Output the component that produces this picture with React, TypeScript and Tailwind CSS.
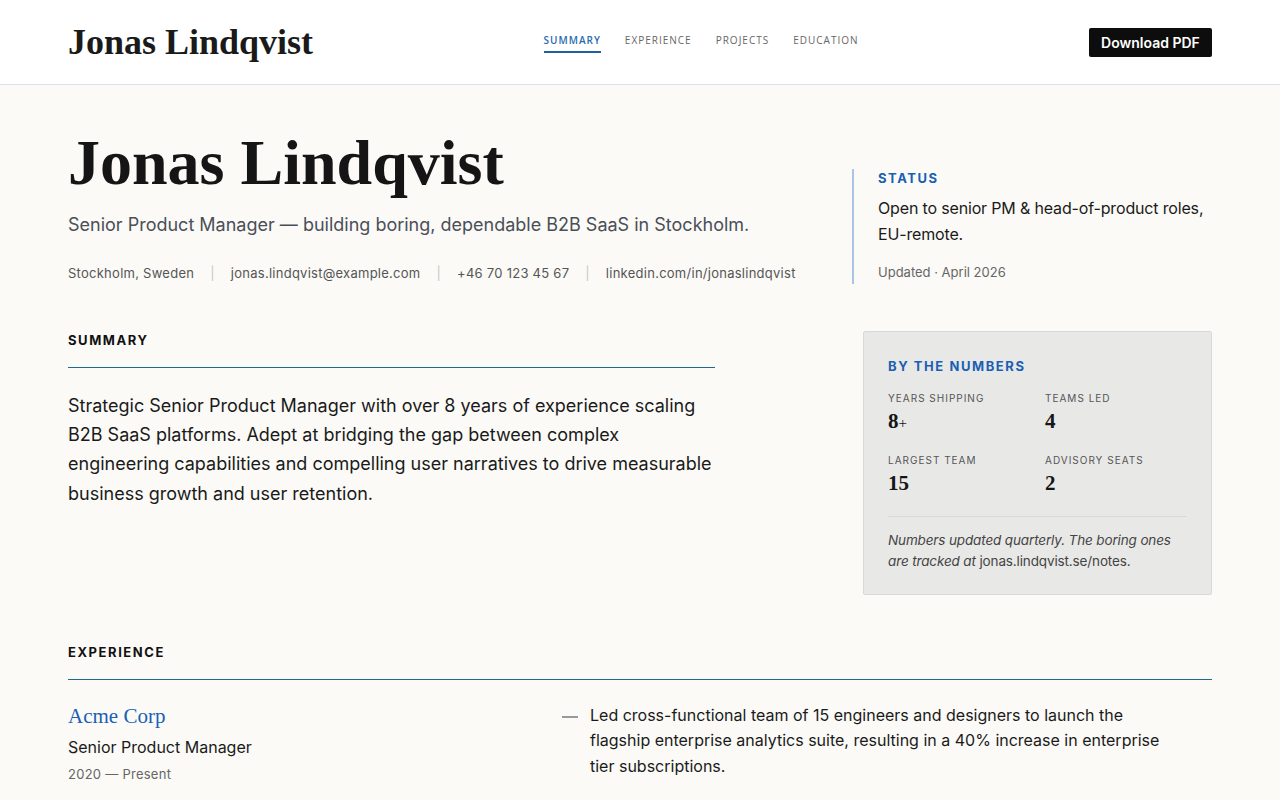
const serif = { fontFamily: '"Liberation Serif", "DejaVu Serif", serif' }

const contacts = [
  'Stockholm, Sweden',
  'jonas.lindqvist@example.com',
  '+46 70 123 45 67',
  'linkedin.com/in/jonaslindqvist',
]

const stats = [
  { label: 'Years shipping', value: '8', suffix: '+' },
  { label: 'Teams led', value: '4' },
  { label: 'Largest team', value: '15' },
  { label: 'Advisory seats', value: '2' },
]

const nav = ['Summary', 'Experience', 'Projects', 'Education']

function SectionTitle({ children }: { children: string }) {
  return (
    <div className="border-b border-[#1d6a8c] pb-[16px]">
      <h2 className="text-[13px] font-bold uppercase tracking-[0.12em] text-[#111]">{children}</h2>
    </div>
  )
}

export default function App() {
  return (
    <div
      className="min-h-screen bg-[#fbfaf7] text-[#1a1a1a]"
      style={{ fontFamily: 'Inter, "Liberation Sans", sans-serif' }}
    >
      {/* Top bar */}
      <header className="border-b border-[#dde0ee] bg-white">
        <div className="mx-[68px] flex h-[84px] items-center justify-between">
          <div className="text-[36px] font-bold leading-none text-[#1a1a1a]" style={serif}>
            Jonas Lindqvist
          </div>
          <nav
            className="flex gap-6 pt-[2px] text-[10px] uppercase tracking-[0.1em]"
            style={{ fontFamily: '"Open Sans", sans-serif' }}
          >
            {nav.map((n, i) => (
              <span
                key={n}
                className={
                  i === 0
                    ? 'border-b-2 border-[#1f5f9f] pb-[3px] font-semibold text-[#2a6cb0]'
                    : 'pb-[3px] text-[#666]'
                }
              >
                {n}
              </span>
            ))}
          </nav>
          <button className="h-[29px] w-[123px] rounded-[2px] bg-[#0d0d0d] text-[14px] font-semibold text-white">
            Download PDF
          </button>
        </div>
      </header>

      <main className="mx-[68px]">
        {/* Hero */}
        <section className="flex justify-between pt-[38px]">
          <div>
            <h1 className="text-[64px] font-bold leading-[80px] text-[#151515]" style={serif}>
              Jonas Lindqvist
            </h1>
            <p className="mt-[8px] text-[18px] text-[#4a4f57]">
              Senior Product Manager — building boring, dependable B2B SaaS in Stockholm.
            </p>
            <div className="mt-[26px] flex items-center text-[13px] tracking-[0.02em] text-[#555]">
              {contacts.map((c, i) => (
                <span key={c} className="flex items-center">
                  {i > 0 && <span className="mx-[16px] text-[#c8c8c8]">|</span>}
                  {c}
                </span>
              ))}
            </div>
          </div>
          <aside className="mt-[46px] h-[115px] w-[360px] border-l-2 border-[#a9c4e6] pl-[24px]">
            <div className="text-[13px] font-bold uppercase tracking-[0.12em] text-[#1a5fb4]">Status</div>
            <p className="mt-[6px] text-[16px] leading-[26px] tracking-[-0.01em] text-[#1a1a1a]">
              Open to senior PM &amp; head-of-product roles, EU-remote.
            </p>
            <div className="mt-[16px] text-[13px] text-[#666]">Updated · April 2026</div>
          </aside>
        </section>

        {/* Summary + numbers */}
        <section className="mt-[47px] flex justify-between">
          <div className="w-[647px]">
            <SectionTitle>Summary</SectionTitle>
            <p className="mt-[23px] text-[18px] leading-[29.4px] text-[#1a1a1a]">
              Strategic Senior Product Manager with over 8 years of experience scaling B2B SaaS platforms.
              Adept at bridging the gap between complex engineering capabilities and compelling user
              narratives to drive measurable business growth and user retention.
            </p>
          </div>
          <div className="h-[264px] w-[349px] rounded-[2px] border border-[#d9d9d9] bg-[#e8e8e7] px-[24px] pt-[25px]">
            <div className="text-[13px] font-bold uppercase tracking-[0.12em] text-[#1a5fb4]">By the numbers</div>
            <div className="mt-[14px] grid grid-cols-[157px_1fr] gap-y-[18px]">
              {stats.map((s) => (
                <div key={s.label}>
                  <div className="text-[10px] leading-[14px] uppercase tracking-[0.1em] text-[#555]">{s.label}</div>
                  <div className="mt-[4px] text-[21px] font-bold leading-[24px] text-[#151515]" style={serif}>
                    {s.value}
                    {s.suffix && <span className="text-[15px] font-normal">{s.suffix}</span>}
                  </div>
                </div>
              ))}
            </div>
            <div className="mt-[21px] border-t border-[#dadada] pt-[13px] text-[13.5px] leading-[21px] tracking-[-0.01em] text-[#444]">
              <i>Numbers updated quarterly. The boring ones are tracked at</i> jonas.lindqvist.se/notes.
            </div>
          </div>
        </section>

        {/* Experience */}
        <section className="mt-[48px] pb-[60px]">
          <SectionTitle>Experience</SectionTitle>
          <div className="mt-[23px] grid grid-cols-[462px_1fr] gap-8">
            <div>
              <h3 className="text-[21px] leading-[26px] text-[#1a5fb4]" style={serif}>
                Acme Corp
              </h3>
              <div className="mt-[6px] text-[16px] text-[#1a1a1a]">Senior Product Manager</div>
              <div className="mt-[6px] text-[13px] tracking-[0.02em] text-[#666]">2020 — Present</div>
            </div>
            <ul className="flex flex-col gap-[20px]">
              <li className="flex">
                <span className="mt-[13px] mr-[12px] h-[2px] w-[16px] shrink-0 bg-[#999]" />
                <span className="max-w-[580px] text-[16px] leading-[25.5px] text-[#1a1a1a]">
                  Led cross-functional team of 15 engineers and designers to launch the flagship enterprise
                  analytics suite, resulting in a 40% increase in enterprise tier subscriptions.
                </span>
              </li>
              <li className="flex">
                <span className="mt-[13px] mr-[12px] h-[2px] w-[16px] shrink-0 bg-[#999]" />
                <span className="max-w-[580px] text-[16px] leading-[25.5px] text-[#1a1a1a]">
                  Implemented a structured discovery framework across product squads, reducing time-to-validate
                  new feature ideas by half and cutting unused feature builds.
                </span>
              </li>
            </ul>
          </div>
        </section>
      </main>
    </div>
  )
}
